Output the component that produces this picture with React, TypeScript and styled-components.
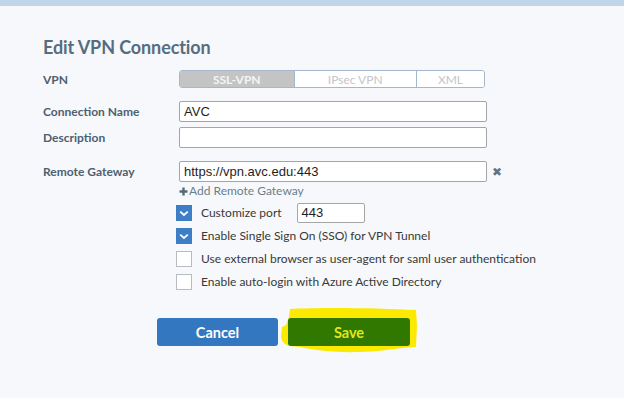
import React from "react";
import styled, { createGlobalStyle } from "styled-components";

const Global = createGlobalStyle`
  html, body { margin: 0; padding: 0; background: #f7f8fb; }
  body { font-family: Lato, "Open Sans", sans-serif; width: 624px; height: 398px; overflow: hidden; }
`;

const TopBar = styled.div`
  height: 6px;
  background: #bfd5ea;
`;

const Page = styled.div`
  padding: 0 0 0 43px;
`;

const Title = styled.h1`
  margin: 30px 0 0;
  height: 22px;
  line-height: 22px;
  font-size: 18px;
  font-weight: 700;
  color: #566d7e;
  letter-spacing: -0.1px;
`;

const Row = styled.div<{ $mt: number; $h: number }>`
  display: grid;
  grid-template-columns: 136px auto;
  align-items: center;
  margin-top: ${(p) => p.$mt}px;
  height: ${(p) => p.$h}px;
`;

const Label = styled.label`
  font-size: 12px;
  font-weight: 700;
  color: #4d6070;
`;

const Segmented = styled.div`
  display: flex;
  width: 306px;
  height: 18px;
  box-sizing: border-box;
  border: 1px solid #a3b8cf;
  border-radius: 3px;
  overflow: hidden;
  background: #fff;
`;

const Seg = styled.div<{ $w: number; $active?: boolean }>`
  width: ${(p) => p.$w}px;
  display: flex;
  align-items: center;
  justify-content: center;
  font-size: 12px;
  font-weight: ${(p) => (p.$active ? 700 : 400)};
  color: ${(p) => (p.$active ? "#f4f4f4" : "#c3c6c9")};
  background: ${(p) => (p.$active ? "#c4c4c4" : "#fff")};
  & + & { border-left: 1px solid #a3b8cf; }
`;

const Field = styled.div`
  display: flex;
  align-items: center;
  gap: 5px;
`;

const Input = styled.div<{ $w: number; $h?: number }>`
  width: ${(p) => p.$w}px;
  height: ${(p) => p.$h ?? 21}px;
  box-sizing: border-box;
  border: 1px solid #a5a5a5;
  border-radius: 2px;
  background: #fff;
  padding: 0 4px;
  font-family: "Liberation Sans", Arial, sans-serif;
  font-size: 13px;
  color: #1e1e1e;
  display: flex;
  align-items: center;
`;

const PortInput = styled(Input)`
  margin-left: 15px;
`;

const Remove = styled.span`
  font-family: "DejaVu Sans", sans-serif;
  font-size: 12px;
  color: #5e7585;
`;

const AddLink = styled.div`
  margin: 2px 0 0 136px;
  height: 14px;
  line-height: 14px;
  font-size: 12px;
  color: #6b7e8d;
  display: flex;
  align-items: center;
`;

const Checks = styled.div`
  margin: 3px 0 0 133px;
  display: flex;
  flex-direction: column;
`;

const CheckRow = styled.div`
  height: 23px;
  display: flex;
  align-items: center;
`;

const Box = styled.span<{ $on?: boolean }>`
  width: 16px;
  height: 16px;
  box-sizing: border-box;
  border: 1px solid ${(p) => (p.$on ? "#3b7cc5" : "#b6bcc2")};
  background: ${(p) => (p.$on ? "#3d7ec6" : "#fff")};
  display: flex;
  align-items: center;
  justify-content: center;
  margin-right: 9px;
`;

const CheckText = styled.span`
  font-size: 12px;
  color: #383838;
`;

const Buttons = styled.div`
  margin: 25px 0 0 114px;
  display: flex;
  gap: 10px;
  align-items: center;
`;

const Button = styled.button<{ $kind: "cancel" | "save" }>`
  width: ${(p) => (p.$kind === "save" ? 122 : 121)}px;
  height: 28px;
  border: none;
  border-radius: 3px;
  font-family: Lato, sans-serif;
  font-weight: 700;
  font-size: 14.5px;
  color: ${(p) => (p.$kind === "save" ? "#e2e61c" : "#ffffff")};
  background: ${(p) => (p.$kind === "save" ? "#307800" : "#3377c1")};
  position: relative;
  z-index: 1;
`;

const HighlightWrap = styled.div`
  position: relative;
`;

const Marker = styled.svg`
  position: absolute;
  left: -8px;
  top: -11px;
  width: 140px;
  height: 48px;
  z-index: 0;
`;

const Check = () => (
  <svg width="10" height="8" viewBox="0 0 10 8">
    <path d="M1.2 2.6 L5 6 L8.8 2.6" stroke="#fff" strokeWidth="1.8" fill="none" />
  </svg>
);

const PlusIcon = () => (
  <svg width="9" height="9" viewBox="0 0 9 9" style={{ marginRight: 1 }}>
    <path d="M4.5 0.5 V8.5 M0.5 4.5 H8.5" stroke="#55697a" strokeWidth="2.4" />
  </svg>
);

export default function App() {
  return (
    <>
      <Global />
      <TopBar />
      <Page>
        <Title>Edit VPN Connection</Title>
        <Row $mt={12} $h={18}>
          <Label>VPN</Label>
          <Segmented>
            <Seg $w={115} $active>SSL-VPN</Seg>
            <Seg $w={123}>IPsec VPN</Seg>
            <Seg $w={68}>XML</Seg>
          </Segmented>
        </Row>
        <Row $mt={13} $h={21}>
          <Label>Connection Name</Label>
          <Input $w={308}>AVC</Input>
        </Row>
        <Row $mt={5} $h={21}>
          <Label>Description</Label>
          <Input $w={308} />
        </Row>
        <Row $mt={13} $h={21}>
          <Label>Remote Gateway</Label>
          <Field>
            <Input $w={308}>https://vpn.avc.edu:443</Input>
            <Remove>✖</Remove>
          </Field>
        </Row>
        <AddLink>
          <PlusIcon />Add Remote Gateway
        </AddLink>
        <Checks>
          <CheckRow>
            <Box $on><Check /></Box>
            <CheckText>Customize port</CheckText>
            <PortInput $w={68} $h={20}>443</PortInput>
          </CheckRow>
          <CheckRow>
            <Box $on><Check /></Box>
            <CheckText>Enable Single Sign On (SSO) for VPN Tunnel</CheckText>
          </CheckRow>
          <CheckRow>
            <Box />
            <CheckText>Use external browser as user-agent for saml user authentication</CheckText>
          </CheckRow>
          <CheckRow>
            <Box />
            <CheckText>Enable auto-login with Azure Active Directory</CheckText>
          </CheckRow>
        </Checks>
        <Buttons>
          <Button $kind="cancel">Cancel</Button>
          <HighlightWrap>
            <Marker viewBox="0 0 140 48">
              <path
                d="M10 2 C40 0 100 1 136 3 L137 18 L136 40 C120 40 110 44 80 45 C50 46 30 42 20 40 L10 39 C6 38 2 36 1 30 L2 20 L6 18 L9 10 Z"
                fill="#fbe900"
              />
            </Marker>
            <Button $kind="save">Save</Button>
          </HighlightWrap>
        </Buttons>
      </Page>
    </>
  );
}
